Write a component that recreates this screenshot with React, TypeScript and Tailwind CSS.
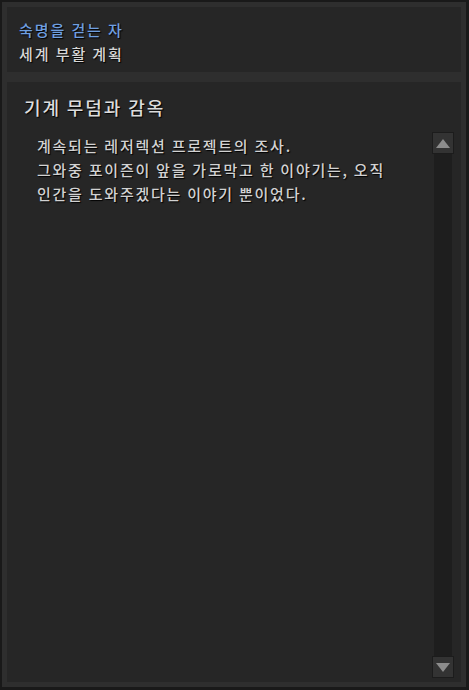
import React from "react";

const lines = [
  "계속되는 레저렉션 프로젝트의 조사.",
  "그와중 포이즌이 앞을 가로막고 한 이야기는, 오직",
  "인간을 도와주겠다는 이야기 뿐이었다.",
];

const ScrollButton = ({ up }: { up?: boolean }) => (
  <div className="w-[22px] h-[22px] bg-[#333333] border border-[#1c1c1c] flex items-center justify-center">
    <svg width="14" height="9" viewBox="0 0 14 9">
      {up ? (
        <polygon points="7,0 14,9 0,9" fill="#8c8c8c" />
      ) : (
        <polygon points="0,0 14,0 7,9" fill="#8c8c8c" />
      )}
    </svg>
  </div>
);

const App = () => {
  return (
    <div
      className="w-[469px] h-[690px] bg-[#2e2e2e] border-l-2 border-t-2 border-r-[3px] border-b-[3px] border-[#191919] px-[5px] pt-[5px] pb-[5px] flex flex-col gap-[10px] [text-shadow:1px_1px_1px_#000]"
      style={{ fontFamily: '"Noto Sans CJK KR", "Noto Sans", sans-serif' }}
    >
      <div className="h-[65px] bg-[#262626] pl-[12px] pt-[11px] flex flex-col">
        <div className="text-[15px] leading-[24px] tracking-[1.9px] font-medium text-[#6f9fe0]">숙명을 걷는 자</div>
        <div className="text-[15px] leading-[24px] tracking-[1.9px] font-medium text-[#d6d6d6]">세계 부활 계획</div>
      </div>
      <div className="flex-1 bg-[#262626] flex flex-col">
        <div className="pl-[17px] pt-[12px] text-[18px] leading-[26px] tracking-[1.9px] font-medium text-[#dcdcdc]">
          기계 무덤과 감옥
        </div>
        <div className="flex-1 flex pt-[12px] pb-[4px]">
          <div className="flex-1 pl-[30px] pt-[2px] text-[15px] leading-[24px] tracking-[1.75px] font-medium text-[#d2d2d2] whitespace-nowrap">
            {lines.map((l) => (
              <div key={l}>{l}</div>
            ))}
          </div>
          <div className="w-[22px] mr-[7px] flex flex-col">
            <ScrollButton up />
            <div className="flex-1 mx-[2px] bg-[#1e1e1e]" />
            <ScrollButton />
          </div>
        </div>
      </div>
    </div>
  );
};

export default App;
